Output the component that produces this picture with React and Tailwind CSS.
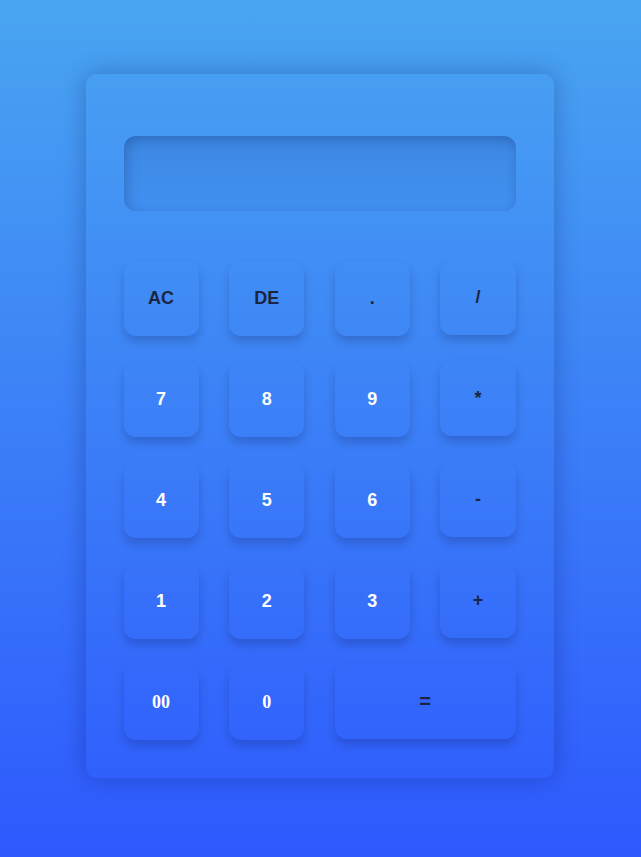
import React from "react";

const keys = [
  { l: "AC", t: "op" },
  { l: "DE", t: "op" },
  { l: ".", t: "op" },
  { l: "/", t: "op2" },
  { l: "7", t: "num" },
  { l: "8", t: "num" },
  { l: "9", t: "num" },
  { l: "*", t: "op2" },
  { l: "4", t: "num" },
  { l: "5", t: "num" },
  { l: "6", t: "num" },
  { l: "-", t: "op2" },
  { l: "1", t: "num" },
  { l: "2", t: "num" },
  { l: "3", t: "num" },
  { l: "+", t: "op2" },
  { l: "00", t: "serif" },
  { l: "0", t: "serif" },
  { l: "=", t: "eq" },
];

function Key({ k }) {
  const base =
    "h-[75px] rounded-[12px] flex items-center justify-center font-bold text-[18px] shadow-[0_6px_10px_rgba(0,0,40,0.18)]";
  if (k.t === "num")
    return (
      <div className={base + " text-white text-[17px] font-['Liberation_Sans',Arial,sans-serif]"}>{k.l}</div>
    );
  if (k.t === "serif")
    return (
      <div className={base + " text-white font-['Liberation_Serif','Times_New_Roman',serif]"}>{k.l}</div>
    );
  if (k.t === "eq")
    return (
      <div className={base + " col-span-2 -translate-y-px text-[#1c2540] text-[20px] font-['Liberation_Sans',Arial,sans-serif]"}>{k.l}</div>
    );
  if (k.t === "op2")
    return (
      <div className={base + " -translate-y-px text-[#1c2540] font-['Liberation_Sans',Arial,sans-serif]"}>{k.l}</div>
    );
  return (
    <div className={base + " text-[#1c2540] font-['Liberation_Sans',Arial,sans-serif]"}>{k.l}</div>
  );
}

export default function App() {
  return (
    <div className="w-full h-[857px] flex items-center justify-center bg-[linear-gradient(to_bottom,#49a5f1_0%,#2e59fe_100%)]">
      <div className="w-[468px] h-[704px] rounded-[10px] px-[38px] pt-[62px] shadow-[0_0_24px_rgba(0,10,80,0.28)] -translate-y-[3px] -translate-x-px">
        <div className="h-[75px] rounded-[12px] bg-[linear-gradient(to_bottom,rgba(20,50,140,0.16),rgba(20,60,140,0.04))] shadow-[inset_2px_4px_12px_rgba(0,20,80,0.25)]"></div>
        <div className="mt-[50px] grid grid-cols-4 gap-x-[30.67px] gap-y-[26px]">
          {keys.map((k, i) => (
            <Key key={i} k={k} />
          ))}
        </div>
      </div>
    </div>
  );
}
